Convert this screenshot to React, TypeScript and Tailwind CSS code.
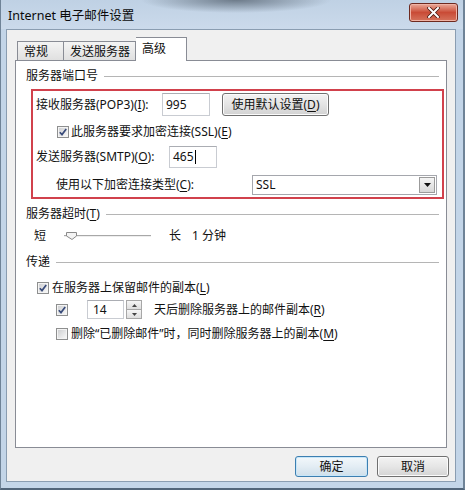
import React from "react";

function U({ children }: { children: React.ReactNode }) {
  return <span className="underline underline-offset-[2px] decoration-[1px]">{children}</span>;
}

function Check({ checked }: { checked: boolean }) {
  return (
    <span className="w-[12px] h-[12px] border border-[#8e8f8f] bg-[#f4f4f4] p-[1px] shrink-0 flex">
      <span className="flex-1 bg-gradient-to-br from-[#cfd0d2] to-[#f7f7f7] flex items-center justify-center">
        {checked && (
          <svg width="8" height="8" viewBox="0 0 8 8">
            <path d="M0.8 4.2 L3 6.6 L7.2 1" fill="none" stroke="#394b7a" strokeWidth="1.7" />
          </svg>
        )}
      </span>
    </span>
  );
}

function Header({ children }: { children: React.ReactNode }) {
  return (
    <div className="h-[16px] flex items-center">
      <span className="leading-[16px]">{children}</span>
      <span className="flex-1 h-px bg-[#b5b5b5] ml-[6px]" />
    </div>
  );
}

function WinButton({ children, className }: { children: React.ReactNode; className?: string }) {
  return (
    <div
      className={`h-[23px] rounded-[3px] border border-[#707070] bg-gradient-to-b from-[#f3f3f3] via-[#e4e4e4] to-[#d2d2d2] flex items-center justify-center shadow-[inset_0_0_0_1px_#fbfbfb] ${className ?? ""}`}
    >
      {children}
    </div>
  );
}

export default function App() {
  return (
    <div className="w-[465px] h-[490px] bg-white font-['Noto_Sans','Noto_Sans_CJK_SC',sans-serif] text-[12px] text-[#111]">
      <div className="w-full h-full flex flex-col bg-[#c3d5e8] border-b-[2px] border-b-[#51657a] border-l border-l-[#6f8397] border-r-[2px] border-r-[#6f8397]">
        {/* Title bar */}
        <div className="h-[29px] flex items-start justify-between bg-[radial-gradient(ellipse_95px_13px_at_235px_0px,#6d7b8a,transparent),linear-gradient(to_bottom,#bfd1e4,#cbdaeb)]">
          <span className="mt-[6px] ml-[7px] leading-[20px] text-[12.5px] text-[#0a0a0a]">Internet 电子邮件设置</span>
          <div className="mt-[3px] mr-[5px] w-[49px] h-[19px] rounded-[3px] border border-[#6e2a20] bg-gradient-to-b from-[#e9a999] via-[#c94b36] to-[#d5735c] flex items-center justify-center shadow-[inset_0_0_0_1px_#f0b3a5]">
            <svg width="13" height="11" viewBox="0 0 13 11">
              <path d="M2 1 L11 10 M11 1 L2 10" stroke="#4a1810" strokeWidth="3.6" strokeLinecap="square" />
              <path d="M2 1 L11 10 M11 1 L2 10" stroke="#ffffff" strokeWidth="2" strokeLinecap="square" />
            </svg>
          </div>
        </div>

        {/* Client area */}
        <div className="ml-[5px] mr-[7px] h-[453px] bg-[#f0f0f0] border border-[#8a9db1] flex flex-col">
          {/* Tabs */}
          <div className="mt-[7px] ml-[10px] h-[23px] flex items-end">
            <div className="w-[47px] h-[19px] border border-[#898c95] border-b-0 bg-gradient-to-b from-[#f4f4f4] to-[#e0e0e0] pl-[6px] leading-[19px]">常规</div>
            <div className="w-[72px] h-[19px] border border-[#898c95] border-b-0 border-l-0 bg-gradient-to-b from-[#f4f4f4] to-[#e0e0e0] pl-[6px] leading-[19px]">发送服务器</div>
            <div className="w-[51px] h-[24px] -mb-px relative z-10 border border-[#898c95] border-b-0 border-l-0 bg-white pl-[6px] leading-[22px]">高级</div>
          </div>

          {/* Panel */}
          <div className="ml-[8px] mr-[8px] h-[388px] bg-white border border-[#898c95] flex flex-col pl-[10px] pr-[7px] pt-[7px]">
            <Header>服务器端口号</Header>

            {/* Red box */}
            <div className="mt-[5px] ml-[5px] -mr-[5px] h-[110px] border-[2px] border-[#d1414c] flex flex-col pl-[3px]">
              <div className="mt-[2px] h-[23px] flex items-center">
                <span className="w-[126px]">接收服务器(POP3)(<U>I</U>):</span>
                <div className="w-[48px] h-[23px] border border-[#c9ccd2] border-t-[#abadb3] bg-white flex items-center pl-[3px]">995</div>
                <WinButton className="ml-[12px] w-[107px]">
                  <span>使用默认设置(<U>D</U>)</span>
                </WinButton>
              </div>
              <div className="mt-[7px] h-[18px] flex items-center pl-[21px]">
                <Check checked />
                <span className="ml-[2px]">此服务器要求加密连接(SSL)(<U>E</U>)</span>
              </div>
              <div className="mt-[5px] h-[22px] flex items-center">
                <span className="w-[133px]">发送服务器(SMTP)(<U>O</U>):</span>
                <div className="w-[48px] h-[22px] border border-[#c9ccd2] border-t-[#abadb3] bg-white flex items-center pl-[3px]">
                  465<span className="w-px h-[14px] bg-black ml-px" />
                </div>
              </div>
              <div className="mt-[7px] h-[20px] flex items-center pl-[20px]">
                <span className="w-[196px]">使用以下加密连接类型(<U>C</U>):</span>
                <div className="w-[185px] h-[20px] border border-[#a5a7ad] bg-white flex items-center pl-[3px] pr-px">
                  <span className="flex-1">SSL</span>
                  <div className="w-[16px] h-[16px] border border-[#9b9b9b] bg-gradient-to-b from-[#f5f5f5] to-[#d8d8d8] flex items-center justify-center">
                    <svg width="7" height="4" viewBox="0 0 7 4">
                      <path d="M0 0 L7 0 L3.5 4 Z" fill="#111" />
                    </svg>
                  </div>
                </div>
              </div>
            </div>

            <div className="mt-[7px]">
              <Header>
                服务器超时(<U>T</U>)
              </Header>
            </div>
            <div className="mt-[5px] h-[18px] flex items-center pl-[8px]">
              <span>短</span>
              <div className="ml-[18px] w-[87px] h-[10px] relative flex items-center">
                <span className="w-full h-[2px] border-t border-t-[#a8a8a8] border-b border-b-[#eeeeee]" />
                <svg className="absolute left-[2px] top-[1px]" width="11" height="8" viewBox="0 0 11 8">
                  <path d="M0.5 0.5 L10.5 0.5 L10.5 4 L6 7.5 L0.5 4 Z" fill="#f4f4f4" stroke="#8a8a8a" />
                </svg>
              </div>
              <span className="ml-[18px]">长</span>
              <span className="ml-[11px]">1 分钟</span>
            </div>

            <div className="mt-[9px]">
              <Header>传递</Header>
            </div>
            <div className="mt-[9px] h-[18px] flex items-center pl-[11px]">
              <Check checked />
              <span className="ml-[3px]">在服务器上保留邮件的副本(<U>L</U>)</span>
            </div>
            <div className="mt-[3px] h-[19px] flex items-center pl-[30px]">
              <Check checked />
              <div className="ml-[19px] w-[37px] h-[19px] border border-[#c9ccd2] border-t-[#abadb3] bg-white flex items-center pl-[5px]">14</div>
              <div className="ml-[2px] w-[16px] h-[19px] flex flex-col">
                <div className="flex-1 border border-[#a7a7a7] bg-gradient-to-b from-[#f6f6f6] to-[#dedede] flex items-center justify-center">
                  <svg width="5" height="3" viewBox="0 0 5 3"><path d="M0 3 L5 3 L2.5 0 Z" fill="#444" /></svg>
                </div>
                <div className="flex-1 border border-t-0 border-[#a7a7a7] bg-gradient-to-b from-[#f6f6f6] to-[#dedede] flex items-center justify-center">
                  <svg width="5" height="3" viewBox="0 0 5 3"><path d="M0 0 L5 0 L2.5 3 Z" fill="#444" /></svg>
                </div>
              </div>
              <span className="ml-[12px]">天后删除服务器上的邮件副本(<U>R</U>)</span>
            </div>
            <div className="mt-[6px] h-[18px] flex items-center pl-[30px]">
              <Check checked={false} />
              <span className="ml-[3px]">删除“已删除邮件”时，同时删除服务器上的副本(<U>M</U>)</span>
            </div>
          </div>

          {/* Buttons */}
          <div className="mt-[8px] flex justify-end gap-[9px] pr-[6px]">
            <div className="w-[73px] h-[21px] rounded-[3px] border border-[#3c7fb1] bg-gradient-to-b from-[#f3f8fb] via-[#e3edf4] to-[#cfdfea] shadow-[inset_0_0_0_1px_#c8e6f8] flex items-center justify-center">确定</div>
            <div className="w-[72px] h-[21px] rounded-[3px] border border-[#707070] bg-gradient-to-b from-[#f3f3f3] via-[#e6e6e6] to-[#d4d4d4] shadow-[inset_0_0_0_1px_#fbfbfb] flex items-center justify-center">取消</div>
          </div>
        </div>
      </div>
    </div>
  );
}
